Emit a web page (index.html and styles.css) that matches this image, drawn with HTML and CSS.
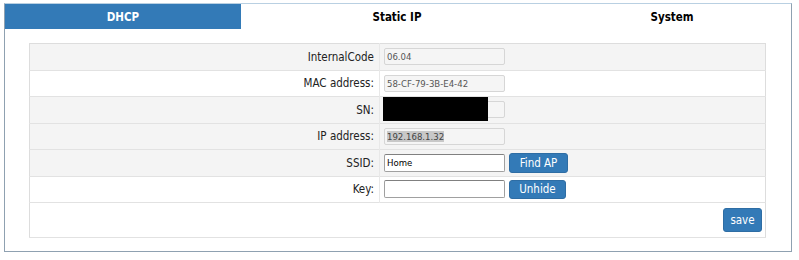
FILE: index.html
```html
<!DOCTYPE html>
<html>
<head>
<meta charset="utf-8">
<link rel="stylesheet" href="styles.css">
</head>
<body>
<div class="panel">
  <div class="tabs">
    <div class="tab tab-dhcp active">DHCP</div>
    <div class="tab tab-static">Static IP</div>
    <div class="tab tab-system">System</div>
  </div>
  <div class="content">
    <table class="grid">
      <tr class="shade">
        <td class="label">InternalCode</td>
        <td class="value"><div class="field ro">06.04</div></td>
      </tr>
      <tr>
        <td class="label">MAC address:</td>
        <td class="value"><div class="field ro">58-CF-79-3B-E4-42</div></td>
      </tr>
      <tr class="shade">
        <td class="label">SN:</td>
        <td class="value"><div class="cellwrap"><div class="field ro"></div><div class="redact"></div></div></td>
      </tr>
      <tr class="shade">
        <td class="label">IP address:</td>
        <td class="value"><div class="field ro"><span class="sel">192.168.1.32</span></div></td>
      </tr>
      <tr class="shade">
        <td class="label">SSID:</td>
        <td class="value"><input class="field edit" type="text" value="Home"><button class="btn btn-find">Find AP</button></td>
      </tr>
      <tr>
        <td class="label">Key:</td>
        <td class="value"><input class="field edit" type="text" value=""><button class="btn btn-unhide">Unhide</button></td>
      </tr>
      <tr class="save-row">
        <td colspan="2" class="save-cell"><button class="btn btn-save">save</button></td>
      </tr>
    </table>
  </div>
</div>
</body>
</html>
```

FILE: styles.css
```css
html, body {
  margin: 0;
  padding: 0;
  background: #ffffff;
}
body {
  font-family: "DejaVu Sans Condensed", "DejaVu Sans", sans-serif;
  font-size: 11px;
  color: #222;
}
.panel {
  margin: 3px 0 0 4px;
  width: 786px;
  border: 1px solid #8fa1b1;
  border-top-color: #b9d0e2;
  box-sizing: content-box;
}
.tabs {
  display: flex;
  height: 25px;
}
.tab {
  display: flex;
  align-items: center;
  justify-content: center;
  font-weight: bold;
  font-size: 11.5px;
  color: #000;
  font-family: "DejaVu Sans Condensed", "DejaVu Sans", sans-serif;
}
.tab-dhcp { width: 236px; }
.tab-static { width: 312px; }
.tab-system { flex: 1; }
.tab.active {
  background: #337ab7;
  color: #fff;
}
.content {
  padding: 14px 24px 13px 24px;
}
.grid {
  width: 737px;
  border-collapse: collapse;
  border: 1px solid #dddddd;
}
.grid tr {
  background: #ffffff;
  border-bottom: 1px solid #e2e2e2;
}
.grid tr.shade {
  background: #f4f4f4;
}
.grid td {
  height: 25.5px;
  padding: 0;
  vertical-align: middle;
}
.label {
  width: 344px;
  text-align: right;
  padding-right: 5px !important;
  border-right: 1px solid #e8e8e8;
  font-size: 11.5px;
  color: #222;
}
.value {
  padding-left: 4px !important;
  white-space: nowrap;
}
.field {
  box-sizing: border-box;
  display: inline-block;
  vertical-align: middle;
  width: 121px;
  height: 17px;
  font-family: "DejaVu Sans Condensed", "DejaVu Sans", sans-serif;
  font-size: 9.5px;
  line-height: 15px;
  padding: 0 0 0 2px;
  margin: 0;
}
.field.ro {
  background: #f5f5f5;
  border: 1px solid #d6d6d6;
  border-radius: 2px;
  color: #555;
}
.field.edit {
  background: #fff;
  border: 1px solid #a0a0a0;
  border-top-color: #808080;
  border-radius: 2px;
  color: #000;
  height: 18px;
  outline: none;
}
.sel {
  background: #c8c8c8;
  color: #444;
}
.cellwrap {
  position: relative;
  display: inline-block;
  vertical-align: middle;
}
.redact {
  position: absolute;
  left: -1px;
  top: -4px;
  width: 105px;
  height: 24px;
  background: #000;
}
.btn {
  display: inline-block;
  vertical-align: middle;
  margin-left: 4px;
  background: #337ab7;
  border: 1px solid #2e6da4;
  border-radius: 3px;
  color: #fff;
  font-family: "DejaVu Sans Condensed", "DejaVu Sans", sans-serif;
  font-size: 11.5px;
  padding: 0;
  text-align: center;
}
.btn-find { width: 59px; height: 20px; }
.btn-unhide { width: 57px; height: 19px; }
.save-row td {
  height: 34px;
}
.save-cell {
  text-align: right;
  padding-right: 3px !important;
}
.btn-save {
  width: 39px;
  height: 24px;
  margin: 0;
}
```
